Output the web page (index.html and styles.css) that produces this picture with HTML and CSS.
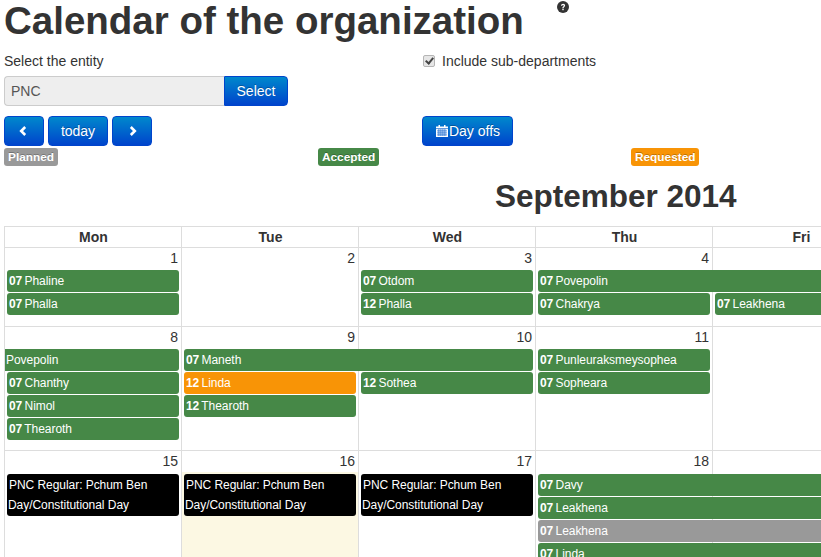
FILE: index.html
```html
<!DOCTYPE html>
<html>
<head>
    <meta charset="utf-8">
    <title>Calendar of the organization</title>
    <link rel="stylesheet" href="styles.css">
</head>
<body>
    <div class="page">
        <div class="title-row">
            <h1>Calendar of the organization</h1>
            <svg class="help-icon" viewBox="0 0 12 12">
                <circle cx="6" cy="6" r="6" fill="#333"/>
                <path d="M4 4.8C4 3.5 4.9 2.8 6.1 2.8S8.1 3.5 8.1 4.6C8.1 6 6.6 6 6.6 7.2H5.3C5.3 5.6 6.7 5.5 6.7 4.7C6.7 4.3 6.5 4 6 4S5.3 4.3 5.3 4.8Z" fill="#fff"/>
                <rect x="5.3" y="7.8" width="1.4" height="1.4" fill="#fff"/>
            </svg>
        </div>

        <div class="row entity-row">
            <div class="col">
                <div class="field-label">Select the entity</div>
                <div class="input-group">
                    <div class="entity-input">PNC</div>
                    <button class="btn btn-append">Select</button>
                </div>
            </div>
            <div class="col">
                <label class="check-label">
                    <input type="checkbox" checked disabled>
                    Include sub-departments
                </label>
            </div>
        </div>

        <div class="row toolbar-row">
            <div class="col toolbar">
                <button class="btn btn-nav">
                    <svg class="chevron chevron-left" viewBox="0 0 8 10"><path d="M6.2 1 2.2 5l4 4" fill="none" stroke="#fff" stroke-width="2.6"/></svg>
                </button>
                <button class="btn btn-today">today</button>
                <button class="btn btn-nav">
                    <svg class="chevron chevron-right" viewBox="0 0 8 10"><path d="M1.8 1l4 4-4 4" fill="none" stroke="#fff" stroke-width="2.6"/></svg>
                </button>
            </div>
            <div class="col">
                <button class="btn btn-dayoffs">
                    <svg class="cal-icon" viewBox="0 0 12 12">
                        <path d="M0 1.5h12V12H0z" fill="#fff"/>
                        <path d="M2.5 0h1.5v2.5H2.5zM8 0h1.5v2.5H8z" fill="#fff"/>
                        <path d="M0 3.6h12M1 5.9h10M1 7.9h10M1 9.9h10M2.9 4v7M4.9 4v7M6.9 4v7M8.9 4v7" stroke="#0a5fcc" stroke-width=".7"/>
                    </svg>Day offs
                </button>
            </div>
        </div>

        <div class="legend">
            <div class="legend-item"><span class="tag tag-planned">Planned</span></div>
            <div class="legend-item"><span class="tag tag-accepted">Accepted</span></div>
            <div class="legend-item"><span class="tag tag-requested">Requested</span></div>
        </div>

        <h2 class="month">September 2014</h2>

        <div class="calendar">
            <div class="head">
                <div class="head-cell">Mon</div>
                <div class="head-cell">Tue</div>
                <div class="head-cell">Wed</div>
                <div class="head-cell">Thu</div>
                <div class="head-cell">Fri</div>
            </div>

            <div class="week week-1">
                <div class="day d1">1</div>
                <div class="day d2">2</div>
                <div class="day d3">3</div>
                <div class="day d4">4</div>
                <div class="day d5"></div>
                <div class="event accepted d1 r1"><b>07</b> Phaline</div>
                <div class="event accepted d1 r2"><b>07</b> Phalla</div>
                <div class="event accepted d3 r1"><b>07</b> Otdom</div>
                <div class="event accepted d3 r2"><b>12</b> Phalla</div>
                <div class="event accepted d4 to-end r1"><b>07</b> Povepolin</div>
                <div class="event accepted d4 r2"><b>07</b> Chakrya</div>
                <div class="event accepted d5 to-end r2"><b>07</b> Leakhena</div>
            </div>

            <div class="week week-2">
                <div class="day d1">8</div>
                <div class="day d2">9</div>
                <div class="day d3">10</div>
                <div class="day d4">11</div>
                <div class="day d5"></div>
                <div class="event accepted d1 from-start r1">Povepolin</div>
                <div class="event accepted d1 r2"><b>07</b> Chanthy</div>
                <div class="event accepted d1 r3"><b>07</b> Nimol</div>
                <div class="event accepted d1 r4"><b>07</b> Thearoth</div>
                <div class="event accepted d2 span2 r1"><b>07</b> Maneth</div>
                <div class="event requested d2 r2"><b>12</b> Linda</div>
                <div class="event accepted d2 r3"><b>12</b> Thearoth</div>
                <div class="event accepted d3 r2"><b>12</b> Sothea</div>
                <div class="event accepted d4 r1"><b>07</b> Punleuraksmeysophea</div>
                <div class="event accepted d4 r2"><b>07</b> Sopheara</div>
            </div>

            <div class="week week-3">
                <div class="day d1">15</div>
                <div class="day d2">16</div>
                <div class="today-fill"></div>
                <div class="day d3">17</div>
                <div class="day d4">18</div>
                <div class="day d5"></div>
                <div class="event holiday d1 r1-2"><span class="holiday-first">PNC Regular: Pchum Ben</span><br>Day/Constitutional Day</div>
                <div class="event holiday d2 r1-2"><span class="holiday-first">PNC Regular: Pchum Ben</span><br>Day/Constitutional Day</div>
                <div class="event holiday d3 r1-2"><span class="holiday-first">PNC Regular: Pchum Ben</span><br>Day/Constitutional Day</div>
                <div class="event accepted d4 to-end r1"><b>07</b> Davy</div>
                <div class="event accepted d4 to-end r2"><b>07</b> Leakhena</div>
                <div class="event planned d4 to-end r3"><b>07</b> Leakhena</div>
                <div class="event accepted d4 to-end r4"><b>07</b> Linda</div>
            </div>
        </div>
    </div>
</body>
</html>
```
FILE: styles.css
```css
html, body {
    margin: 0;
    height: 557px;
    overflow: hidden;
    background: #fff;
}

body {
    font-family: "Liberation Sans", Arial, sans-serif;
    font-size: 14px;
    line-height: 20px;
    color: #333;
}

.page {
    width: 817px;
    height: 557px;
    padding-left: 4px;
    overflow: hidden;
}

/* title */
.title-row {
    display: flex;
    height: 42px;
}

h1 {
    margin: 0;
    font-size: 38.5px;
    line-height: 42px;
    font-weight: bold;
}

.help-icon {
    width: 12px;
    height: 12px;
    margin-left: 33px;
    margin-top: 1px;
}

/* form rows */
.row {
    display: grid;
    grid-template-columns: 418px 1fr;
}

.entity-row {
    margin-top: 9px;
}

.field-label {
    height: 25px;
}

.input-group {
    display: flex;
    height: 30px;
}

.entity-input {
    width: 220px;
    box-sizing: border-box;
    padding: 4px 6px;
    background: #eee;
    border: 1px solid #ccc;
    border-right: 0;
    border-radius: 4px 0 0 4px;
    color: #555;
}

.check-label {
    display: flex;
    align-items: center;
    height: 20px;
    gap: 7px;
}

.check-label input {
    appearance: none;
    position: relative;
    box-sizing: border-box;
    width: 12px;
    height: 12px;
    margin: 0 0 0 1px;
    background: #e6e6e6;
    border: 1px solid #b5b5b5;
    border-radius: 2px;
}

/* check mark */
.check-label input::after {
    content: "";
    position: absolute;
    left: 3px;
    top: 0;
    width: 3px;
    height: 6px;
    border: solid #444;
    border-width: 0 2px 2px 0;
    transform: rotate(40deg);
}

/* buttons */
.btn {
    display: inline-flex;
    align-items: center;
    justify-content: center;
    height: 30px;
    box-sizing: border-box;
    padding: 0;
    border: 1px solid #04c;
    border-radius: 4px;
    background: linear-gradient(to bottom, #08c, #04c);
    color: #fff;
    font-family: inherit;
    font-size: 14px;
    text-shadow: 0 -1px 0 rgba(0, 0, 0, .25);
}

.btn-append {
    width: 64px;
    border-radius: 0 4px 4px 0;
}

.toolbar-row {
    margin-top: 10px;
}

.toolbar {
    display: flex;
    gap: 4px;
}

.btn-nav {
    width: 40px;
}

.btn-today {
    width: 60px;
}

.btn-dayoffs {
    width: 91px;
    padding-left: 1px;
}

.chevron {
    width: 8px;
    height: 10px;
}

.chevron-left {
    margin-right: 2px;
}

.chevron-right {
    margin-left: 2px;
}

.cal-icon {
    width: 12px;
    height: 12px;
    margin-right: 1px;
}

/* legend */
.legend {
    display: grid;
    grid-template-columns: 314px 313px 1fr;
    margin-top: 2px;
}

.legend-item {
    height: 18px;
}

.tag {
    display: inline-block;
    padding: 0 4px;
    height: 18px;
    border-radius: 3px;
    color: #fff;
    font-size: 11.844px;
    font-weight: bold;
    line-height: 18px;
    text-shadow: 0 -1px 0 rgba(0, 0, 0, .25);
    vertical-align: top;
}

.tag-planned { background: #999; }
.tag-accepted { background: #468847; }
.tag-requested { background: #f89406; }

.month {
    margin: 0;
    padding: 12px 0 0 491px;
    height: 48px;
    font-size: 31.5px;
    line-height: 36px;
    font-weight: bold;
}

/* calendar */
.calendar {
    width: 886px;
    font-size: 12px;
    line-height: 20px;
}

.head {
    display: grid;
    grid-template-columns: repeat(5, 177px);
    height: 20px;
    border-top: 1px solid #ddd;
    border-bottom: 1px solid #ddd;
}

.head-cell {
    border-left: 1px solid #ddd;
    margin-right: -1px;
    text-align: center;
    font-size: 14px;
    font-weight: bold;
    line-height: 20px;
}

.week {
    display: grid;
    grid-template-columns: repeat(5, 177px);
    grid-template-rows: 22px repeat(4, auto) 1fr;
    border-bottom: 1px solid #ddd;
}

.week-1 { height: 78px; }
.week-2 { height: 123px; }
.week-3 { height: 140px; border-bottom: 0; grid-template-rows: 23px repeat(4, auto) 1fr; }

.day {
    grid-row: 1 / -1;
    border-left: 1px solid #ddd;
    padding-right: 3px;
    font-size: 14px;
    line-height: 20px;
    text-align: right;
}

.today-fill {
    grid-column: 2;
    grid-row: 2 / -1;
    margin: -2px 0 0 1px;
    background: #fcf8e3;
}

.d1 { grid-column: 1; }
.d2 { grid-column: 2; }
.d3 { grid-column: 3; }
.d4 { grid-column: 4; }
.d5 { grid-column: 5; }
.d2.span2 { grid-column: 2 / span 2; }
.d4.to-end { grid-column: 4 / span 2; }
.d5.to-end { grid-column: 5; }

.r1 { grid-row: 2; }
.r2 { grid-row: 3; }
.r3 { grid-row: 4; }
.r4 { grid-row: 5; }
.r1-2 { grid-row: 2 / span 2; }

.event {
    height: 22px;
    margin: 0 2px 1px 3px;
    padding: 0 2px;
    border-radius: 3px;
    color: #fff;
    font-size: 12px;
    letter-spacing: -0.05px;
    line-height: 22px;
    white-space: nowrap;
    overflow: hidden;
    z-index: 1;
}

.event b {
    margin-right: -1px;
}

.accepted { background: #468847; }
.requested { background: #f89406; }
.planned { background: #999; }

.to-end {
    margin-right: 0;
    border-radius: 3px 0 0 3px;
}

.from-start {
    margin-left: 1px;
    padding-left: 1px;
    border-radius: 0 3px 3px 0;
}

.holiday {
    height: 41px;
    background: #000;
    line-height: 20px;
    padding: 1px 1px 0;
    white-space: normal;
}

.holiday-first {
    padding-left: 1px;
}
```
